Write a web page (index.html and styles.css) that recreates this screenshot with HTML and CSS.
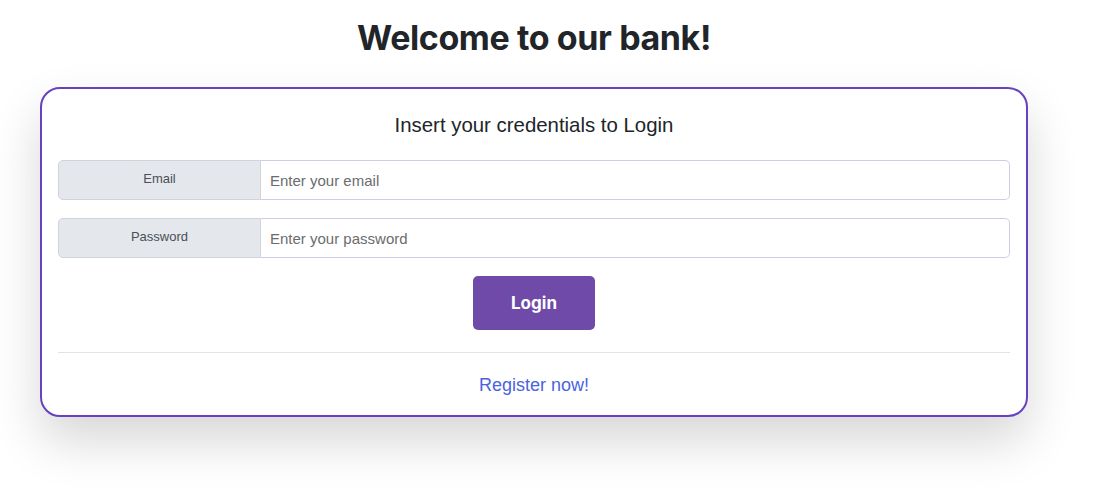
FILE: index.html
```html
<!DOCTYPE html>
<html lang="en">
<head>
<meta charset="utf-8">
<title>Welcome to our bank!</title>
<link rel="stylesheet" href="styles.css">
</head>
<body>
<div class="page">
  <h1 class="title">Welcome to our bank!</h1>
  <div class="card">
    <h2 class="subtitle">Insert your credentials to Login</h2>
    <div class="input-group">
      <span class="prepend">Email</span>
      <input class="field" type="email" placeholder="Enter your email">
    </div>
    <div class="input-group">
      <span class="prepend">Password</span>
      <input class="field" type="password" placeholder="Enter your password">
    </div>
    <div class="actions">
      <button class="btn" type="button">Login</button>
    </div>
    <hr class="divider">
    <div class="footer">
      <a class="link" href="#">Register now!</a>
    </div>
  </div>
</div>
</body>
</html>
```
FILE: styles.css
```css
* { box-sizing: border-box; }
html, body { margin: 0; padding: 0; background: #fff; }
body { font-family: "Liberation Sans", Arial, sans-serif; color: #212529; min-height: 100vh; }
.page { width: 988px; margin-left: 40px; padding-top: 18px; padding-bottom: 90px; }
.title {
  font-family: Inter, "Liberation Sans", sans-serif;
  font-weight: 700;
  font-size: 34px;
  line-height: 40px;
  letter-spacing: -0.4px;
  text-align: center;
  margin: 0 0 29px 0;
  color: #212529;
}
.card {
  border: 2px solid #6741c0;
  border-radius: 20px;
  background: #fff;
  padding: 22px 16px 16px 16px;
  box-shadow: 0 24px 50px rgba(0,0,0,0.16);
}
.subtitle {
  font-weight: 400;
  font-size: 20.4px;
  line-height: 28px;
  text-align: center;
  margin: 0 0 21px 0;
  color: #212529;
}
.input-group {
  display: flex;
  height: 40px;
  margin-bottom: 18px;
}
.prepend {
  width: 203px;
  flex: none;
  display: flex;
  align-items: center;
  justify-content: center;
  padding-bottom: 3px;
  background: #e4e7ec;
  border: 1px solid #ced4da;
  border-radius: 5px 0 0 5px;
  font-size: 13px;
  color: #495057;
}
.field {
  flex: 1;
  border: 1px solid #cfcde3;
  border-left: none;
  border-radius: 0 5px 5px 0;
  padding: 0 9px;
  font-family: "Liberation Sans", Arial, sans-serif;
  font-size: 15px;
  color: #495057;
  outline: none;
}
.field::placeholder { color: #6c6c6c; }
.actions { display: flex; justify-content: center; }
.btn {
  width: 122px;
  height: 54px;
  border: none;
  border-radius: 5px;
  background: #6f4aa9;
  color: #fff;
  font-family: Inter, "Liberation Sans", sans-serif;
  font-weight: 700;
  font-size: 17px;
}
.divider {
  border: none;
  border-top: 1px solid #e3e3e3;
  margin: 22px 0 18px 0;
}
.footer { text-align: center; }
.link {
  color: #4a63df;
  text-decoration: none;
  font-size: 18px;
  line-height: 28px;
}
```
